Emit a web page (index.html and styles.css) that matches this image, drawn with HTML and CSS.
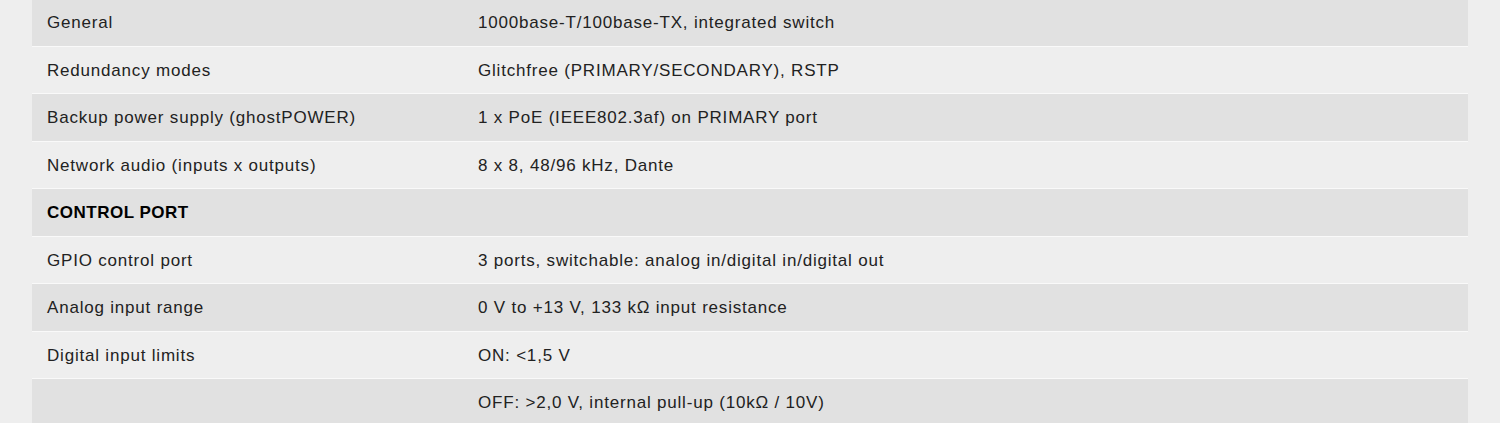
FILE: index.html
```html
<!DOCTYPE html>
<html lang="en">
<head>
  <meta charset="UTF-8">
  <meta name="viewport" content="width=device-width, initial-scale=1.0">
  <title>Technical specifications</title>
  <link rel="stylesheet" href="styles.css">
</head>
<body>

<!-- Tabla de especificaciones -->
<table class="specs">
  <tr class="dark">
    <td>General</td>
    <td>1000base-T/100base-TX, integrated switch</td>
  </tr>
  <tr>
    <td>Redundancy modes</td>
    <td>Glitchfree (PRIMARY/SECONDARY), RSTP</td>
  </tr>
  <tr class="dark">
    <td>Backup power supply (ghostPOWER)</td>
    <td>1 x PoE (IEEE802.3af) on PRIMARY port</td>
  </tr>
  <tr>
    <td>Network audio (inputs x outputs)</td>
    <td>8 x 8, 48/96 kHz, Dante</td>
  </tr>
  <tr class="dark section">
    <td colspan="2">CONTROL PORT</td>
  </tr>
  <tr>
    <td>GPIO control port</td>
    <td>3 ports, switchable: analog in/digital in/digital out</td>
  </tr>
  <tr class="dark">
    <td>Analog input range</td>
    <td>0 V to +13 V, 133 kΩ input resistance</td>
  </tr>
  <tr>
    <td>Digital input limits</td>
    <td>ON: &lt;1,5 V</td>
  </tr>
  <tr class="dark">
    <td></td>
    <td>OFF: &gt;2,0 V, internal pull-up (10kΩ / 10V)</td>
  </tr>
</table>

</body>
</html>
```

FILE: styles.css
```css
body {
  margin: 0;
  padding: 0 32px;
  background-color: #eeeeee;
  font-family: "Liberation Sans", Arial, sans-serif;
  font-size: 17px;
  letter-spacing: 0.8px;
  color: #222;
}

.specs {
  width: 100%;
  table-layout: fixed;
  border-collapse: collapse;
  margin-top: -1px;
}

.specs td {
  padding: 13px 15px 11px;
  line-height: 22.5px;
  border-bottom: 1px solid #f9f9f9;
  vertical-align: middle;
}

.specs td:first-child {
  width: 401px;
}

.specs tr.dark {
  background-color: #e1e1e1;
}

/* Fila de sección */
.specs tr.section td {
  font-weight: bold;
  letter-spacing: 0.5px;
  color: #000;
}
```
